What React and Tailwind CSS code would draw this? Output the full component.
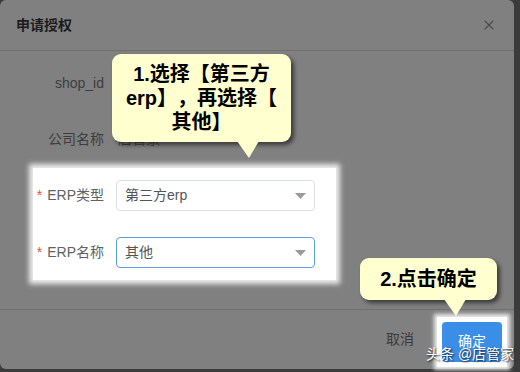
import { X } from "lucide-react";

const FONT = { fontFamily: '"Liberation Sans", "Noto Sans CJK SC", sans-serif' };

function Caret() {
  return (
    <svg width="11" height="6" viewBox="0 0 11 6">
      <path d="M0 0 L11 0 L5.5 6 Z" fill="#9a9a9a" />
    </svg>
  );
}

function Tail({ className }) {
  return (
    <svg className={className} width="22" height="18" viewBox="0 0 22 18">
      <path d="M0 0 L22 0 L12 17 Z" fill="#ffffd0" />
    </svg>
  );
}

function Field({ label, value, active }) {
  return (
    <div className="flex h-[31px] items-center">
      <span className="w-[71px] text-right text-[14px] text-[#606266]">
        <span className="mr-[5px] text-[#e5553e]">*</span>
        {label}
      </span>
      <div
        className={`ml-[12px] flex h-[31px] w-[199px] items-center justify-between rounded-[4px] border px-[8px] text-[14px] text-[#555] ${
          active ? "border-[#5e9de3]" : "border-[#dcdfe6]"
        }`}
      >
        <span>{value}</span>
        <Caret />
      </div>
    </div>
  );
}

export default function App() {
  return (
    <div className="relative h-[372px] w-[520px] overflow-hidden bg-[#3b3b3b]" style={FONT}>
      <div className="flex h-[369px] w-[514px] flex-col rounded-[6px] bg-[#808080]">
        {/* header */}
        <div className="flex h-[51px] shrink-0 items-center justify-between border-b border-[#6f6f6f] pl-[16px] pr-[17px]">
          <span className="text-[14px] font-bold text-[#1c1c1c]">申请授权</span>
          <X className="h-[16px] w-[16px] text-[#4a4a4a]" strokeWidth={1.6} />
        </div>

        {/* body */}
        <div className="pt-[16px]">
          <div className="flex h-[32px] items-center">
            <span className="w-[104px] text-right text-[14px] text-[#3d3d3d]">shop_id</span>
          </div>
          <div className="mt-[24px] flex h-[32px] items-center">
            <span className="w-[104px] text-right text-[14px] text-[#3d3d3d]">公司名称</span>
            <span className="ml-[14px] text-[14px] text-[#4a4a4a]">店管家</span>
          </div>

          <div className="ml-[33px] mt-[13px] w-[303px] bg-white py-[12px] shadow-[0_0_5px_4px_rgba(255,255,255,0.85)]">
            <Field label="ERP类型" value="第三方erp" />
            <div className="mt-[26px]">
              <Field label="ERP名称" value="其他" active />
            </div>
          </div>
        </div>

        {/* footer */}
        <div className="mt-auto flex h-[60px] items-center justify-end border-t border-[#6f6f6f] pr-[7px]">
          <span className="text-[14px] text-[#3a3a3a]">取消</span>
          <div className="ml-[23px] mt-[4px] bg-white p-[5px] shadow-[0_0_4px_3px_rgba(255,255,255,0.85)]">
            <div className="flex h-[40px] w-[60px] items-center justify-center rounded-[4px] bg-[#3b8ee8] text-[14px] text-white">
              确定
            </div>
          </div>
        </div>
      </div>

      {/* callout 1 */}
      <div className="absolute left-[112px] top-[54px] h-[88px] w-[179px] whitespace-nowrap rounded-[9px] bg-[#ffffd0] py-[8px] text-center text-[20px] font-bold leading-[24px] text-black shadow-[3px_3px_4px_rgba(0,0,0,0.55)] [text-spacing-trim:space-all]">
        1.选择【第三方
        <br />
        erp】，再选择【
        <br />
        其他】
      </div>
      <Tail className="absolute left-[237px] top-[141px]" />

      {/* callout 2 */}
      <div className="absolute left-[360px] top-[258px] flex h-[42px] w-[137px] items-center justify-center whitespace-nowrap rounded-[9px] bg-[#ffffd0] text-[20px] font-bold text-black shadow-[3px_3px_4px_rgba(0,0,0,0.55)]">
        2.点击确定
      </div>
      <Tail className="absolute left-[444px] top-[299px]" />

      {/* watermark */}
      <div className="absolute left-[426px] top-[344px] whitespace-nowrap text-[14px] text-white [text-shadow:1px_1px_2px_rgba(0,0,0,0.9)]">
        头条 @店管家
      </div>
    </div>
  );
}
